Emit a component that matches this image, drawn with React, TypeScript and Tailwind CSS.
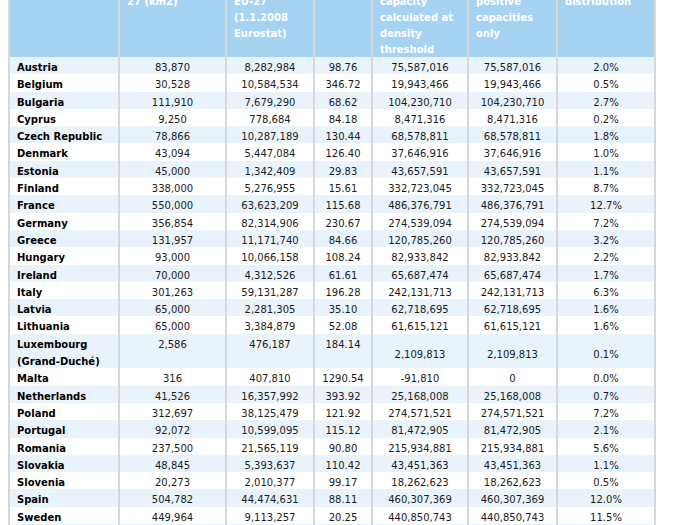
type Row = {
  country: string;
  area: string;
  population: string;
  density: string;
  capacity: string;
  positive: string;
  share: string;
  tall?: boolean;
};

const rows: Row[] = [
  { country: "Austria", area: "83,870", population: "8,282,984", density: "98.76", capacity: "75,587,016", positive: "75,587,016", share: "2.0%" },
  { country: "Belgium", area: "30,528", population: "10,584,534", density: "346.72", capacity: "19,943,466", positive: "19,943,466", share: "0.5%" },
  { country: "Bulgaria", area: "111,910", population: "7,679,290", density: "68.62", capacity: "104,230,710", positive: "104,230,710", share: "2.7%" },
  { country: "Cyprus", area: "9,250", population: "778,684", density: "84.18", capacity: "8,471,316", positive: "8,471,316", share: "0.2%" },
  { country: "Czech Republic", area: "78,866", population: "10,287,189", density: "130.44", capacity: "68,578,811", positive: "68,578,811", share: "1.8%" },
  { country: "Denmark", area: "43,094", population: "5,447,084", density: "126.40", capacity: "37,646,916", positive: "37,646,916", share: "1.0%" },
  { country: "Estonia", area: "45,000", population: "1,342,409", density: "29.83", capacity: "43,657,591", positive: "43,657,591", share: "1.1%" },
  { country: "Finland", area: "338,000", population: "5,276,955", density: "15.61", capacity: "332,723,045", positive: "332,723,045", share: "8.7%" },
  { country: "France", area: "550,000", population: "63,623,209", density: "115.68", capacity: "486,376,791", positive: "486,376,791", share: "12.7%" },
  { country: "Germany", area: "356,854", population: "82,314,906", density: "230.67", capacity: "274,539,094", positive: "274,539,094", share: "7.2%" },
  { country: "Greece", area: "131,957", population: "11,171,740", density: "84.66", capacity: "120,785,260", positive: "120,785,260", share: "3.2%" },
  { country: "Hungary", area: "93,000", population: "10,066,158", density: "108.24", capacity: "82,933,842", positive: "82,933,842", share: "2.2%" },
  { country: "Ireland", area: "70,000", population: "4,312,526", density: "61.61", capacity: "65,687,474", positive: "65,687,474", share: "1.7%" },
  { country: "Italy", area: "301,263", population: "59,131,287", density: "196.28", capacity: "242,131,713", positive: "242,131,713", share: "6.3%" },
  { country: "Latvia", area: "65,000", population: "2,281,305", density: "35.10", capacity: "62,718,695", positive: "62,718,695", share: "1.6%" },
  { country: "Lithuania", area: "65,000", population: "3,384,879", density: "52.08", capacity: "61,615,121", positive: "61,615,121", share: "1.6%" },
  { country: "Luxembourg (Grand-Duché)", area: "2,586", population: "476,187", density: "184.14", capacity: "2,109,813", positive: "2,109,813", share: "0.1%", tall: true },
  { country: "Malta", area: "316", population: "407,810", density: "1290.54", capacity: "-91,810", positive: "0", share: "0.0%" },
  { country: "Netherlands", area: "41,526", population: "16,357,992", density: "393.92", capacity: "25,168,008", positive: "25,168,008", share: "0.7%" },
  { country: "Poland", area: "312,697", population: "38,125,479", density: "121.92", capacity: "274,571,521", positive: "274,571,521", share: "7.2%" },
  { country: "Portugal", area: "92,072", population: "10,599,095", density: "115.12", capacity: "81,472,905", positive: "81,472,905", share: "2.1%" },
  { country: "Romania", area: "237,500", population: "21,565,119", density: "90.80", capacity: "215,934,881", positive: "215,934,881", share: "5.6%" },
  { country: "Slovakia", area: "48,845", population: "5,393,637", density: "110.42", capacity: "43,451,363", positive: "43,451,363", share: "1.1%" },
  { country: "Slovenia", area: "20,273", population: "2,010,377", density: "99.17", capacity: "18,262,623", positive: "18,262,623", share: "0.5%" },
  { country: "Spain", area: "504,782", population: "44,474,631", density: "88.11", capacity: "460,307,369", positive: "460,307,369", share: "12.0%" },
  { country: "Sweden", area: "449,964", population: "9,113,257", density: "20.25", capacity: "440,850,743", positive: "440,850,743", share: "11.5%" },
  { country: "United Kingdom", area: "244,820", population: "61,185,981", density: "249.92", capacity: "183,634,019", positive: "183,634,019", share: "4.8%" },
];

const cols = "grid grid-cols-[108px_105px_86px_56px_94px_87px_96px] gap-x-[2px]";

const headers: string[][] = [
  ["Country"],
  ["Surface area EU-", "27 (km2)"],
  ["Population", "EU-27", "(1.1.2008", "Eurostat)"],
  ["Density"],
  ["Wind", "capacity", "calculated at", "density", "threshold"],
  ["Sum of", "positive", "capacities", "only"],
  ["Share of", "distribution"],
];

function HeaderRow() {
  return (
    <div className={`${cols} h-[80px]`}>
      {headers.map((lines, i) => (
        <div key={i} className="bg-[#a7d3f3] pl-[7px] pt-[2.5px] text-white font-bold leading-[16px]">
          {lines.map((line) => (
            <div key={line} className="whitespace-nowrap">
              {line}
            </div>
          ))}
        </div>
      ))}
    </div>
  );
}

function DataRow({ row, index }: { row: Row; index: number }) {
  const bg = index % 2 === 0 ? "bg-[#e8f3fc]" : "bg-white";
  const height = row.tall ? "h-[32.6px]" : "h-[15.3px]";
  const top = `${bg} pt-[2px] text-center`;
  const middle = `${bg} flex justify-center ${row.tall ? "items-center pt-[5px]" : "items-start pt-[2px]"}`;
  return (
    <div className={`${cols} ${height} leading-[17px] text-[#1b1b1b]`}>
      <div className={`${bg} pl-[7px] pt-[2px] font-bold text-black`}>
        <div className={row.tall ? "w-[90px]" : "whitespace-nowrap"}>{row.country}</div>
      </div>
      <div className={top}>{row.area}</div>
      <div className={top}>{row.population}</div>
      <div className={top}>{row.density}</div>
      <div className={middle}>{row.capacity}</div>
      <div className={middle}>{row.positive}</div>
      <div className={middle}>{row.share}</div>
    </div>
  );
}

export default function App() {
  return (
    <div className="w-[677px] h-[525px] overflow-hidden bg-white font-['DejaVu_Sans',sans-serif] text-[10px]">
      <div className="ml-[8px] -mt-[27px] w-[648px] bg-[#d7d7d7] p-[2px] flex flex-col gap-y-[2px]">
        <HeaderRow />
        {rows.map((row, i) => (
          <DataRow key={row.country} row={row} index={i} />
        ))}
      </div>
    </div>
  );
}
